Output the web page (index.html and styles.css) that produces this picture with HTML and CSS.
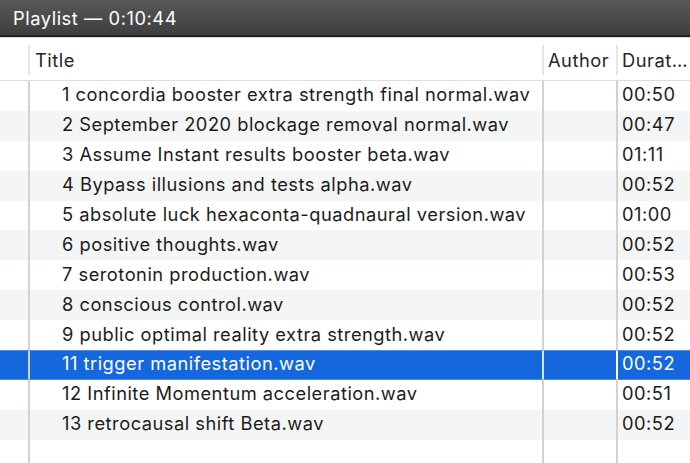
FILE: index.html
```html
<!DOCTYPE html>
<html lang="en">
<head>
    <meta charset="UTF-8">
    <meta name="viewport" content="width=device-width, initial-scale=1.0">
    <title>Playlist</title>
    <link rel="stylesheet" href="styles.css">
</head>
<body>
    <div class="window">
        <div class="titlebar">Playlist — 0:10:44</div>
        <div class="list">
            <div class="row head">
                <div class="cell gutter"></div>
                <div class="cell title">Title</div>
                <div class="cell author">Author</div>
                <div class="cell duration">Durat…</div>
            </div>
            <div class="row">
                <div class="cell gutter"></div>
                <div class="cell title">1 concordia booster extra strength final normal.wav</div>
                <div class="cell author"></div>
                <div class="cell duration">00:50</div>
            </div>
            <div class="row">
                <div class="cell gutter"></div>
                <div class="cell title">2 September 2020 blockage removal normal.wav</div>
                <div class="cell author"></div>
                <div class="cell duration">00:47</div>
            </div>
            <div class="row">
                <div class="cell gutter"></div>
                <div class="cell title">3 Assume Instant results booster beta.wav</div>
                <div class="cell author"></div>
                <div class="cell duration">01:11</div>
            </div>
            <div class="row">
                <div class="cell gutter"></div>
                <div class="cell title">4 Bypass illusions and tests alpha.wav</div>
                <div class="cell author"></div>
                <div class="cell duration">00:52</div>
            </div>
            <div class="row">
                <div class="cell gutter"></div>
                <div class="cell title">5 absolute luck hexaconta-quadnaural version.wav</div>
                <div class="cell author"></div>
                <div class="cell duration">01:00</div>
            </div>
            <div class="row">
                <div class="cell gutter"></div>
                <div class="cell title">6 positive thoughts.wav</div>
                <div class="cell author"></div>
                <div class="cell duration">00:52</div>
            </div>
            <div class="row">
                <div class="cell gutter"></div>
                <div class="cell title">7 serotonin production.wav</div>
                <div class="cell author"></div>
                <div class="cell duration">00:53</div>
            </div>
            <div class="row">
                <div class="cell gutter"></div>
                <div class="cell title">8 conscious control.wav</div>
                <div class="cell author"></div>
                <div class="cell duration">00:52</div>
            </div>
            <div class="row">
                <div class="cell gutter"></div>
                <div class="cell title">9 public optimal reality extra strength.wav</div>
                <div class="cell author"></div>
                <div class="cell duration">00:52</div>
            </div>
            <div class="row selected">
                <div class="cell gutter"></div>
                <div class="cell title">11 trigger manifestation.wav</div>
                <div class="cell author"></div>
                <div class="cell duration">00:52</div>
            </div>
            <div class="row">
                <div class="cell gutter"></div>
                <div class="cell title">12 Infinite Momentum acceleration.wav</div>
                <div class="cell author"></div>
                <div class="cell duration">00:51</div>
            </div>
            <div class="row">
                <div class="cell gutter"></div>
                <div class="cell title">13 retrocausal shift Beta.wav</div>
                <div class="cell author"></div>
                <div class="cell duration">00:52</div>
            </div>
            <div class="row filler">
                <div class="cell gutter"></div>
                <div class="cell title"></div>
                <div class="cell author"></div>
                <div class="cell duration"></div>
            </div>
        </div>
    </div>
</body>
</html>
```

FILE: styles.css
```css
body {
    margin: 0;
    font-family: Inter, "Noto Sans", sans-serif;
    background-color: #ffffff;
    overflow: hidden;
}

.window {
    width: 690px;
    height: 463px;
    display: flex;
    flex-direction: column;
}

.titlebar {
    height: 35px;
    padding-left: 13px;
    display: flex;
    align-items: center;
    color: #ffffff;
    font-size: 18.3px;
    letter-spacing: 0.55px;
    background: linear-gradient(#585858, #3e3e3e);
    border-bottom: 2px solid #1f1f1f;
    box-shadow: 0 1px 0 #d8d8d8;
}

.list {
    flex: 1;
    display: flex;
    flex-direction: column;
    padding-top: 3px;
}

.row {
    display: flex;
    height: 29.9px;
    font-size: 18.3px;
    letter-spacing: 0.5px;
    color: #1c1c1c;
}

.row:nth-child(odd) .cell {
    background-color: #f4f5f5;
}

.row .cell {
    box-sizing: border-box;
    display: flex;
    align-items: center;
    padding-bottom: 3px;
    border-right: 2px solid #d2d2d2;
    white-space: nowrap;
    overflow: hidden;
}

.gutter {
    width: 30px;
}

.title {
    width: 514px;
    padding-left: 32px;
}

.author {
    width: 74px;
    padding-left: 4px;
}

.row .duration {
    flex: 1;
    border-right: none;
    padding-left: 4px;
}

/* header row */
.row.head {
    height: 41px;
    padding: 5px 0;
    box-sizing: border-box;
    border-bottom: 1px solid #dedede;
    color: #262626;
}

.row.head .cell {
    padding-bottom: 1px;
    background-color: #ffffff;
    border-right-color: #e6e6e6;
}

.row.head .title {
    padding-left: 5px;
}

/* selected */
.row.selected .cell {
    background-color: #1467dc;
    color: #ffffff;
    border-top: 1px solid #4a8ae8;
    border-bottom: 1px solid #4a8ae8;
}

.row.selected .gutter {
    border-right-color: #d2d2d2;
}

.row.selected .title {
    border-right-color: #d8e4f6;
}

.row.selected .author {
    border-right-color: #ffffff;
}

.row.filler {
    flex: 1;
}

.row.filler .cell {
    background-color: #ffffff;
}
```
